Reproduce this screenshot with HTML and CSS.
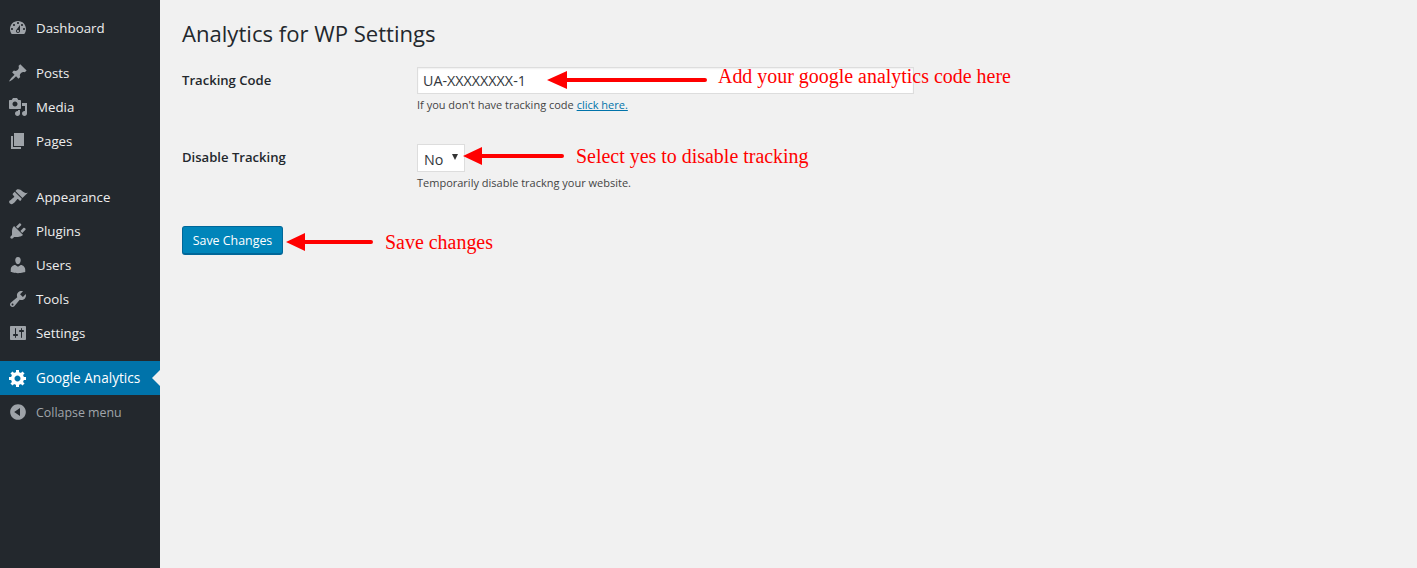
FILE: index.html
```html
<!DOCTYPE html>
<html lang="en">
<head>
<meta charset="utf-8">
<title>Analytics for WP Settings</title>
<link rel="stylesheet" href="styles.css">
</head>
<body>
<div class="shell">
  <nav class="sidebar">
    <ul class="menu group-first">
      <li class="item"><svg class="icon" viewBox="0 0 20 20"><path d="M3.76 16h12.48c1.1-1.37 1.76-3.11 1.76-5 0-4.42-3.58-8-8-8s-8 3.58-8 8c0 1.89.66 3.63 1.76 5zM10 4c.55 0 1 .45 1 1s-.45 1-1 1-1-.45-1-1 .45-1 1-1zM6 6c.55 0 1 .45 1 1s-.45 1-1 1-1-.45-1-1 .45-1 1-1zm8 0c.55 0 1 .45 1 1s-.45 1-1 1-1-.45-1-1 .45-1 1-1zm-5.37 5.55L12 7v6c0 1.1-.9 2-2 2s-2-.9-2-2c0-.57.24-1.08.63-1.45zM4 10c.55 0 1 .45 1 1s-.45 1-1 1-1-.45-1-1 .45-1 1-1zm12 0c.55 0 1 .45 1 1s-.45 1-1 1-1-.45-1-1 .45-1 1-1zm-5 3c0-.55-.45-1-1-1s-1 .45-1 1 .45 1 1 1 1-.45 1-1z"/></svg><span>Dashboard</span></li>
    </ul>
    <ul class="menu group">
      <li class="item"><svg class="icon" viewBox="0 0 20 20"><path d="M10.44 3.02l1.82-1.82 6.36 6.35-1.83 1.82c-1.05-.68-2.48-.57-3.41.36l-.75.75c-.92.93-1.04 2.35-.35 3.41l-1.83 1.82-2.41-2.41-2.8 2.79c-.42.42-3.38 2.71-3.8 2.29s1.86-3.39 2.28-3.81l2.79-2.79L4.1 9.36l1.83-1.82c1.05.69 2.48.57 3.4-.36l.75-.75c.93-.92 1.05-2.35.36-3.41z"/></svg><span>Posts</span></li>
      <li class="item"><svg class="icon" viewBox="0 0 20 20"><path d="M13 11V4c0-.55-.45-1-1-1h-1.67L9 1H5L3.67 3H2c-.55 0-1 .45-1 1v7c0 .55.45 1 1 1h10c.55 0 1-.45 1-1zM7 4.5c1.38 0 2.5 1.12 2.5 2.5S8.38 9.5 7 9.5 4.5 8.38 4.5 7 5.62 4.5 7 4.5zM14 6h5v10.5c0 1.38-1.12 2.5-2.5 2.5S14 17.88 14 16.5s1.12-2.5 2.5-2.5c.17 0 .34.02.5.05V9h-3V6zm-4 8.05V13h2v3.5c0 1.38-1.12 2.5-2.5 2.5S7 17.88 7 16.5 8.12 14 9.5 14c.17 0 .34.02.5.05z"/></svg><span>Media</span></li>
      <li class="item"><svg class="icon" viewBox="0 0 20 20"><path d="M6 15V2h10v13H6zm-1 1h8v2H3V5h2v11z"/></svg><span>Pages</span></li>
    </ul>
    <ul class="menu group-wide">
      <li class="item"><svg class="icon" viewBox="0 0 20 20"><path d="M14.48 11.06L7.41 3.99l1.5-1.5c.5-.56 2.3-.47 3.51.32 1.21.8 1.43 1.28 2.91 2.1 1.18.64 2.45 1.26 4.45.85zm-.71.71L6.7 4.7 4.93 6.47c-.39.39-.39 1.02 0 1.41l1.06 1.06c.39.39.39 1.03 0 1.42-.6.6-1.43 1.11-2.21 1.69-.35.26-.7.53-1.01.84C1.43 13.23.4 14.84 1.98 16.42c1.57 1.57 3.17.53 4.51-.8.31-.31.58-.66.85-1.02.57-.78 1.08-1.61 1.69-2.21.39-.39 1.02-.39 1.41 0l1.06 1.06c.39.39 1.02.39 1.41 0z"/></svg><span>Appearance</span></li>
      <li class="item"><svg class="icon" viewBox="0 0 20 20"><path d="M13.11 4.36L9.87 7.6 8 5.73l3.24-3.24c.35-.34 1.05-.2 1.56.32.52.51.66 1.21.31 1.55zm-8 1.77l.91-1.12 9.01 9.01-1.19.84c-.71.71-2.63 1.16-3.82 1.16H6.14L4.9 17.26c-.59.59-1.54.59-2.12 0-.59-.58-.59-1.53 0-2.12l1.24-1.24v-3.88c0-1.13.4-3.19 1.09-3.89zm7.26 3.97l3.24-3.24c.34-.35 1.04-.21 1.55.31.52.51.66 1.21.31 1.55l-3.24 3.25z"/></svg><span>Plugins</span></li>
      <li class="item"><svg class="icon" viewBox="0 0 20 20"><path d="M10 9.25c-2.27 0-2.73-3.44-2.73-3.44C7 4.02 7.82 2 9.97 2c2.16 0 2.98 2.02 2.71 3.81 0 0-.41 3.44-2.68 3.44zm0 2.57L12.72 10c2.39 0 4.52 2.33 4.52 4.53v2.49s-3.65 1.13-7.24 1.13c-3.65 0-7.24-1.13-7.24-1.13v-2.49c0-2.25 1.94-4.48 4.47-4.48z"/></svg><span>Users</span></li>
      <li class="item"><svg class="icon" viewBox="0 0 20 20"><path d="M16.68 9.77c-1.34 1.34-3.3 1.67-4.95.99l-5.41 6.52c-.99.99-2.59.99-3.58 0s-.99-2.59 0-3.57l6.52-5.42c-.68-1.65-.35-3.61.99-4.95 1.28-1.28 3.12-1.62 4.72-1.06l-2.89 2.89 2.82 2.82 2.86-2.87c.53 1.58.18 3.39-1.08 4.65zM3.81 16.21c.4.39 1.04.39 1.43 0 .4-.4.4-1.04 0-1.43-.39-.4-1.03-.4-1.43 0-.39.39-.39 1.03 0 1.43z"/></svg><span>Tools</span></li>
      <li class="item"><svg class="icon" viewBox="0 0 20 20"><path d="M18 16V4c0-.55-.45-1-1-1H3c-.55 0-1 .45-1 1v12c0 .55.45 1 1 1h14c.55 0 1-.45 1-1zM8 11h1c.55 0 1 .45 1 1s-.45 1-1 1H8v1.5c0 .28-.22.5-.5.5s-.5-.22-.5-.5V13H6c-.55 0-1-.45-1-1s.45-1 1-1h1V5.5c0-.28.22-.5.5-.5s.5.22.5.5V11zm5-2h-1c-.55 0-1-.45-1-1s.45-1 1-1h1V5.5c0-.28.22-.5.5-.5s.5.22.5.5V7h1c.55 0 1 .45 1 1s-.45 1-1 1h-1v5.5c0 .28-.22.5-.5.5s-.5-.22-.5-.5V9z"/></svg><span>Settings</span></li>
    </ul>
    <ul class="menu group">
      <li class="item current"><svg class="icon" viewBox="0 0 20 20"><path d="M18 12h-2.18c-.17.7-.44 1.35-.81 1.93l1.54 1.54-2.1 2.1-1.54-1.54c-.58.36-1.23.63-1.91.79V19H8v-2.18c-.68-.16-1.33-.43-1.91-.79l-1.54 1.54-2.12-2.12 1.54-1.54c-.36-.58-.63-1.23-.79-1.91H1V9.03h2.17c.16-.7.44-1.35.8-1.94L2.43 5.55l2.1-2.1 1.54 1.54c.58-.37 1.24-.64 1.93-.81V2h3v2.18c.68.16 1.33.43 1.91.79l1.54-1.54 2.12 2.12-1.54 1.54c.36.59.64 1.24.8 1.94H18V12zm-8.5 1.5c1.66 0 3-1.34 3-3s-1.34-3-3-3-3 1.34-3 3 1.34 3 3 3z"/></svg><span class="current-label">Google Analytics</span></li>
      <li class="item collapse"><svg class="icon" viewBox="0 0 20 20"><path d="M10 2.16c4.33 0 7.84 3.51 7.84 7.84s-3.51 7.84-7.84 7.84S2.16 14.33 2.16 10 5.71 2.16 10 2.16zm2 11.72V6.12L6.18 9.97z"/></svg><span>Collapse menu</span></li>
    </ul>
  </nav>
  <main class="content">
    <h1 class="title">Analytics for WP Settings</h1>
    <form class="form">
      <div class="row row-code">
        <label class="label">Tracking Code</label>
        <div class="field">
          <input class="text-input" type="text" value="UA-XXXXXXXX-1">
          <p class="help">If you don't have tracking code <a href="#" class="link">click here.</a></p>
        </div>
      </div>
      <div class="row row-disable">
        <label class="label">Disable Tracking</label>
        <div class="field">
          <div class="select"><span>No</span><i class="caret"></i></div>
          <p class="help">Temporarily disable trackng your website.</p>
        </div>
      </div>
      <div class="actions"><button class="save" type="button">Save Changes</button></div>
    </form>
    <div class="note note-code">
      <svg class="arrow arrow-code" viewBox="0 0 160 20"><path d="M0 10 20 1V8H158a2 2 0 0 1 0 4H20V19Z"/></svg>
      <span>Add your google analytics code here</span>
    </div>
    <div class="note note-disable">
      <svg class="arrow arrow-disable" viewBox="0 0 101 20"><path d="M0 10 19 1V8H99a2 2 0 0 1 0 4H19V19Z"/></svg>
      <span>Select yes to disable tracking</span>
    </div>
    <div class="note note-save">
      <svg class="arrow arrow-save" viewBox="0 0 87 20"><path d="M0 10 19 1V8H85a2 2 0 0 1 0 4H19V19Z"/></svg>
      <span>Save changes</span>
    </div>
  </main>
</div>
</body>
</html>
```
FILE: styles.css
```css
* { box-sizing: border-box; }
html, body { margin: 0; height: 100%; }
body { background: #f1f1f1; color: #23282d; font-family: "Open Sans", "Noto Sans", sans-serif; overflow: hidden; }
.shell { display: flex; height: 568px; }
.sidebar { width: 160px; flex: none; background: #23282d; padding-top: 11px; }
.menu { list-style: none; margin: 0; padding: 0; }
.group { margin-top: 11px; }
.group-wide { margin-top: 22px; }
.item { position: relative; height: 34px; display: flex; align-items: center; color: #eee; font-size: 13.3px; }
.icon { width: 20px; height: 20px; margin-left: 8px; margin-right: 8px; fill: #9ea3a8; flex: none; }
.current { background: #0073aa; color: #fff; font-size: 13.6px; }
.current .icon { fill: #fff; }
.current-label { margin-top: -2px; }
.current::after { content: ""; position: absolute; right: 0; top: 9px; border: 8px solid transparent; border-right-color: #f1f1f1; border-left-width: 0; }
.collapse { color: #a0a5aa; font-size: 12.4px; }
.content { position: relative; flex: 1; padding: 19px 0 0 22px; }
.title { margin: 0; font-size: 22.1px; line-height: 29px; font-weight: 400; color: #23282d; }
.form { margin-top: 19px; }
.row { display: grid; grid-template-columns: 235px 497px; }
.row-disable { margin-top: 31px; }
.label { font-size: 13.1px; font-weight: 600; line-height: 27px; color: #23282d; }
.text-input { display: block; width: 497px; height: 27px; margin: 0; padding: 0 5px; border: 1px solid #ddd; background: #fff; color: #32373c; font: 14.3px "Open Sans", sans-serif; box-shadow: inset 0 1px 2px rgba(0,0,0,.07); border-radius: 0; outline: none; }
.help { margin: 2px 0 0; font-size: 11px; line-height: 17px; color: #444; }
.link { color: #0073aa; }
.select { width: 48px; height: 28px; background: #fff; border: 1px solid #ddd; display: flex; align-items: center; justify-content: space-between; padding: 2px 6px 0 6px; color: #32373c; font-size: 14.3px; }
.caret { width: 0; height: 0; margin-top: -4px; border: 3.5px solid transparent; border-top: 6px solid #333; border-bottom-width: 0; }
.actions { margin-top: 35px; }
.save { display: block; width: 101px; height: 29px; padding: 1px 0 0; border: 1px solid #006799; border-bottom-width: 2px; border-radius: 3px; background: #0085ba; color: #fff; font: 12.4px "Open Sans", sans-serif; }
.note { position: absolute; display: flex; align-items: center; color: #f00; font-family: "Liberation Serif", serif; font-size: 19.95px; line-height: 24px; white-space: nowrap; }
.arrow { height: 20px; fill: #f00; flex: none; }
.note-code { left: 387px; top: 70px; }
.note-code span { margin: -8px 0 0 11px; }
.arrow-code { width: 160px; }
.note-disable { left: 303px; top: 144px; }
.note-disable span { margin-left: 12px; }
.arrow-disable { width: 101px; }
.note-save { left: 126px; top: 230px; }
.note-save span { margin-left: 12px; }
.arrow-save { width: 87px; }
```
